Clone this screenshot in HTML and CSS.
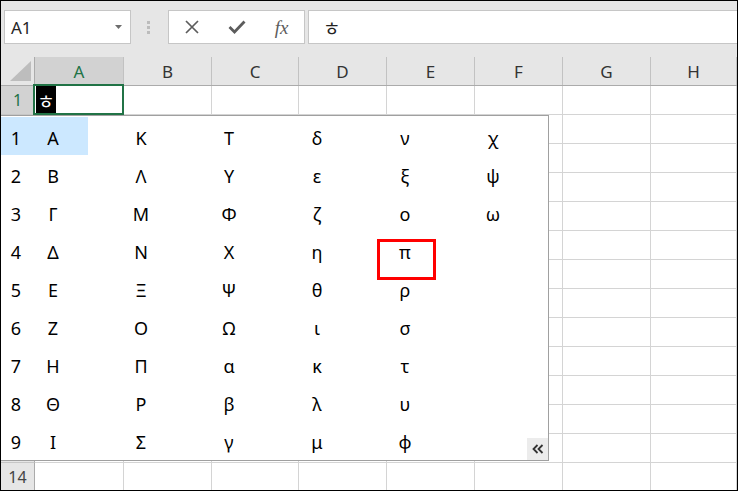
FILE: index.html
```html
<!DOCTYPE html>
<html lang="ko">
<head>
<meta charset="utf-8">
<title>Excel</title>
<link rel="stylesheet" href="styles.css">
</head>
<body>
<div class="app">
  <div class="toolbar">
    <div class="namebox"><span>A1</span><svg class="dd" width="7" height="4" viewBox="0 0 7 4"><path d="M0 0H7L3.5 4Z" fill="#6d6d6d"/></svg></div>
    <div class="grip"><i></i><i></i><i></i></div>
    <div class="fbtns">
      <div class="fbtn"><svg width="14" height="14" viewBox="0 0 14 14"><path d="M1 1L13 13M13 1L1 13" stroke="#5c5c5c" stroke-width="1.7" fill="none"/></svg></div>
      <div class="fbtn"><svg width="18" height="14" viewBox="0 0 18 14"><path d="M1.5 7L6.5 12L16.5 1.5" stroke="#5c5c5c" stroke-width="2.8" fill="none"/></svg></div>
      <div class="fbtn"><span class="fx">fx</span></div>
    </div>
    <div class="finput">ㅎ</div>
  </div>

  <div class="sheet">
    <div class="row hrow">
      <div class="hcell"><div class="hc corner"><svg width="22" height="20" viewBox="0 0 22 20"><path d="M21 0V20H0Z" fill="#bdbdbd"/></svg></div></div>
      <div class="hcell"><div class="hc sel-h">A</div></div>
      <div class="hcell"><div class="hc">B</div></div>
      <div class="hcell"><div class="hc">C</div></div>
      <div class="hcell"><div class="hc">D</div></div>
      <div class="hcell"><div class="hc">E</div></div>
      <div class="hcell"><div class="hc">F</div></div>
      <div class="hcell"><div class="hc">G</div></div>
      <div class="hcell"><div class="hc">H</div></div>
    </div>
    <div class="row">
      <div class="rh sel-r">1</div>
      <div class="c a1"><span class="ime">ㅎ</span><span class="sel"></span></div>
      <div class="c"></div><div class="c"></div><div class="c"></div><div class="c"></div><div class="c"></div><div class="c"></div><div class="c"></div>
    </div>
    <div class="row"><div class="rh"></div><div class="c"></div><div class="c"></div><div class="c"></div><div class="c"></div><div class="c"></div><div class="c"></div><div class="c"></div><div class="c"></div></div>
    <div class="row"><div class="rh"></div><div class="c"></div><div class="c"></div><div class="c"></div><div class="c"></div><div class="c"></div><div class="c"></div><div class="c"></div><div class="c"></div></div>
    <div class="row"><div class="rh"></div><div class="c"></div><div class="c"></div><div class="c"></div><div class="c"></div><div class="c"></div><div class="c"></div><div class="c"></div><div class="c"></div></div>
    <div class="row"><div class="rh"></div><div class="c"></div><div class="c"></div><div class="c"></div><div class="c"></div><div class="c"></div><div class="c"></div><div class="c"></div><div class="c"></div></div>
    <div class="row"><div class="rh"></div><div class="c"></div><div class="c"></div><div class="c"></div><div class="c"></div><div class="c"></div><div class="c"></div><div class="c"></div><div class="c"></div></div>
    <div class="row"><div class="rh"></div><div class="c"></div><div class="c"></div><div class="c"></div><div class="c"></div><div class="c"></div><div class="c"></div><div class="c"></div><div class="c"></div></div>
    <div class="row"><div class="rh"></div><div class="c"></div><div class="c"></div><div class="c"></div><div class="c"></div><div class="c"></div><div class="c"></div><div class="c"></div><div class="c"></div></div>
    <div class="row"><div class="rh"></div><div class="c"></div><div class="c"></div><div class="c"></div><div class="c"></div><div class="c"></div><div class="c"></div><div class="c"></div><div class="c"></div></div>
    <div class="row"><div class="rh"></div><div class="c"></div><div class="c"></div><div class="c"></div><div class="c"></div><div class="c"></div><div class="c"></div><div class="c"></div><div class="c"></div></div>
    <div class="row"><div class="rh"></div><div class="c"></div><div class="c"></div><div class="c"></div><div class="c"></div><div class="c"></div><div class="c"></div><div class="c"></div><div class="c"></div></div>
    <div class="row"><div class="rh"></div><div class="c"></div><div class="c"></div><div class="c"></div><div class="c"></div><div class="c"></div><div class="c"></div><div class="c"></div><div class="c"></div></div>
    <div class="row"><div class="rh"></div><div class="c"></div><div class="c"></div><div class="c"></div><div class="c"></div><div class="c"></div><div class="c"></div><div class="c"></div><div class="c"></div></div>
    <div class="row"><div class="rh">14</div><div class="c"></div><div class="c"></div><div class="c"></div><div class="c"></div><div class="c"></div><div class="c"></div><div class="c"></div><div class="c"></div></div>
  </div>

  <div class="popup">
    <div class="item active"><span>1</span><span>Α</span></div>
    <div class="item"><span>2</span><span>Β</span></div>
    <div class="item"><span>3</span><span>Γ</span></div>
    <div class="item"><span>4</span><span>Δ</span></div>
    <div class="item"><span>5</span><span>Ε</span></div>
    <div class="item"><span>6</span><span>Ζ</span></div>
    <div class="item"><span>7</span><span>Η</span></div>
    <div class="item"><span>8</span><span>Θ</span></div>
    <div class="item"><span>9</span><span>Ι</span></div>

    <div class="item"><span></span><span>Κ</span></div>
    <div class="item"><span></span><span>Λ</span></div>
    <div class="item"><span></span><span>Μ</span></div>
    <div class="item"><span></span><span>Ν</span></div>
    <div class="item"><span></span><span>Ξ</span></div>
    <div class="item"><span></span><span>Ο</span></div>
    <div class="item"><span></span><span>Π</span></div>
    <div class="item"><span></span><span>Ρ</span></div>
    <div class="item"><span></span><span>Σ</span></div>

    <div class="item"><span></span><span>Τ</span></div>
    <div class="item"><span></span><span>Υ</span></div>
    <div class="item"><span></span><span>Φ</span></div>
    <div class="item"><span></span><span>Χ</span></div>
    <div class="item"><span></span><span>Ψ</span></div>
    <div class="item"><span></span><span>Ω</span></div>
    <div class="item"><span></span><span>α</span></div>
    <div class="item"><span></span><span>β</span></div>
    <div class="item"><span></span><span>γ</span></div>

    <div class="item"><span></span><span>δ</span></div>
    <div class="item"><span></span><span>ε</span></div>
    <div class="item"><span></span><span>ζ</span></div>
    <div class="item"><span></span><span>η</span></div>
    <div class="item"><span></span><span>θ</span></div>
    <div class="item"><span></span><span>ι</span></div>
    <div class="item"><span></span><span>κ</span></div>
    <div class="item"><span></span><span>λ</span></div>
    <div class="item"><span></span><span>μ</span></div>

    <div class="item"><span></span><span>ν</span></div>
    <div class="item"><span></span><span>ξ</span></div>
    <div class="item"><span></span><span>ο</span></div>
    <div class="item mark"><span></span><span>π</span></div>
    <div class="item"><span></span><span>ρ</span></div>
    <div class="item"><span></span><span>σ</span></div>
    <div class="item"><span></span><span>τ</span></div>
    <div class="item"><span></span><span>υ</span></div>
    <div class="item"><span></span><span>φ</span></div>

    <div class="item"><span></span><span>χ</span></div>
    <div class="item"><span></span><span>ψ</span></div>
    <div class="item"><span></span><span>ω</span></div>

    <div class="more"><svg width="12" height="10" viewBox="0 0 12 10"><path d="M5.5 1L1.5 5L5.5 9M10.5 1L6.5 5L10.5 9" stroke="#333" stroke-width="1.8" fill="none"/></svg></div>
  </div>
</div>
</body>
</html>
```

FILE: styles.css
```css
* { box-sizing: border-box; }
html, body { margin: 0; padding: 0; background: #fff; }
body { font-family: "Noto Sans", "Noto Sans CJK KR", sans-serif; }

.app {
  position: relative;
  width: 738px;
  height: 491px;
  border: 1px solid #000;
  overflow: hidden;
  background: #fff;
}

/* toolbar */
.toolbar {
  display: flex;
  align-items: flex-start;
  height: 49px;
  padding: 9px 0 0 3px;
  background: #e6e6e6;
}
.namebox {
  width: 127px;
  height: 34px;
  background: #fff;
  border: 1px solid #c6c6c6;
  display: flex;
  align-items: center;
  justify-content: space-between;
  padding: 0 8px 0 6px;
  font-size: 17px;
  color: #262626;
}
.grip {
  display: flex;
  flex-direction: column;
  gap: 2px;
  margin: 11px 18px 0 16px;
}
.grip i { display: block; width: 3px; height: 3px; background: #bcbcbc; }
.fbtns {
  width: 137px;
  height: 34px;
  background: #fff;
  border: 1px solid #c6c6c6;
  display: flex;
}
.fbtn { width: 45px; display: flex; align-items: center; justify-content: center; }
.fx {
  font-family: "Liberation Serif", serif;
  font-style: italic;
  font-size: 19px;
  color: #5c5c5c;
  line-height: 1;
}
.finput {
  flex: 1;
  margin-left: 3px;
  height: 34px;
  background: #fff;
  border: 1px solid #c6c6c6;
  border-right: none;
  display: flex;
  align-items: center;
  padding-left: 14px;
  font-family: "Noto Sans CJK KR", sans-serif;
  font-size: 19px;
  color: #222;
}

/* sheet */
.row {
  display: grid;
  grid-template-columns: 34px 89px 88px 87px 88px 88px 88px 88px 1fr;
  height: 29px;
}
.hrow { height: 36px; background: #e6e6e6; border-bottom: 1px solid #ababab; }
.hcell { padding-top: 7px; }
.hc {
  height: 28px;
  border-right: 1px solid #c2c2c2;
  display: flex;
  align-items: center;
  justify-content: center;
  font-size: 17px;
  color: #333;
}
.hc.corner { border-right-color: #ababab; align-items: flex-end; justify-content: flex-end; padding: 0 2px 4px 0; }
.hc.sel-h { background: #d2d2d2; color: #217346; }

.rh {
  background: #e6e6e6;
  border-right: 1px solid #ababab;
  border-bottom: 1px solid #c6c6c6;
  display: flex;
  align-items: center;
  justify-content: center;
  font-size: 16px;
  color: #444;
}
.rh.sel-r { background: #d2d2d2; color: #217346; }
.c {
  border-right: 1px solid #d4d4d4;
  border-bottom: 1px solid #d4d4d4;
}
.a1 { position: relative; display: flex; }
.ime {
  margin-left: 1px;
  width: 20px;
  background: #000;
  color: #fff;
  font-family: "Noto Sans CJK KR", sans-serif;
  font-size: 19px;
  line-height: 1;
  display: flex;
  align-items: center;
  justify-content: center;
}
.sel {
  position: absolute;
  top: -2px;
  left: -2px;
  right: -1px;
  bottom: -1px;
  border: 2px solid #217346;
}

/* candidate popup */
.popup {
  position: absolute;
  left: 0;
  top: 114px;
  width: 548px;
  height: 346px;
  background: #fff;
  border: 1px solid #a0a0a0;
  border-left: none;
  padding-top: 1px;
  display: grid;
  grid-template-columns: repeat(6, 88px);
  grid-template-rows: repeat(9, 38px);
  grid-auto-flow: column;
}
.item {
  display: grid;
  grid-template-columns: 30px 44px;
  align-items: center;
  padding-top: 4px;
  font-size: 18px;
  color: #000;
  text-align: center;
}
.item.active { background: #cce8ff; margin-right: 1px; }
.item.mark { position: relative; }
.item.mark::after {
  content: "";
  position: absolute;
  left: 24px;
  top: 8px;
  width: 53px;
  height: 35px;
  border: 3px solid #ff0000;
}
.more {
  position: absolute;
  right: 0;
  bottom: 0;
  width: 21px;
  height: 22px;
  background: #ececec;
  display: flex;
  align-items: center;
  justify-content: center;
}
```
